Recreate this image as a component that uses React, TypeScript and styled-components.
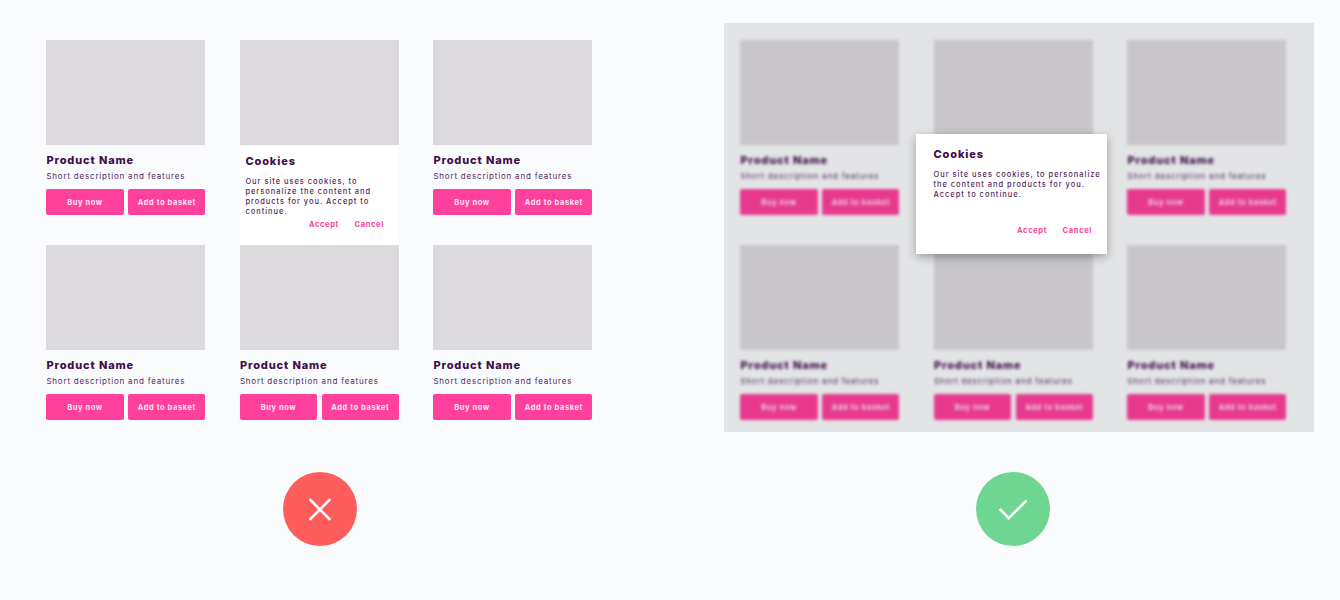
import React from 'react';
import styled, { createGlobalStyle, css } from 'styled-components';

const color = {
  PAGE: '#f9fbfd',
  TITLE: '#3f0f4b',
  TEXT: '#542a5e',
  PRIMARY: '#ff409c',
  IMAGE: '#dcdadd',
  WRONG: '#ff5c5c',
  RIGHT: '#6fd692',
};

const products = [1, 2, 3, 4, 5, 6];

const ProductInfo: React.FC = () => (
  <Info>
    <Title>Product Name</Title>
    <Description>Short description and features</Description>
    <ButtonBox>
      <Button>Buy now</Button>
      <Button>Add to basket</Button>
    </ButtonBox>
  </Info>
);

const InlineNotice: React.FC = () => (
  <Notice>
    <Title>Cookies</Title>
    <CookieText>
      Our site uses cookies, to
      <br />
      personalize the content and
      <br />
      products for you. Accept to
      <br />
      continue.
    </CookieText>
    <NoticeActions>
      <LinkButton>Accept</LinkButton>
      <LinkButton>Cancel</LinkButton>
    </NoticeActions>
  </Notice>
);

interface ProductsProps {
  blurred?: boolean;
}

/* The second product never shows its info: the notice or the modal is there */
const Products: React.FC<ProductsProps> = ({ blurred }) => (
  <ProductGrid $blurred={blurred}>
    {products.map((id) => (
      <Card key={id}>
        <Image />
        {id !== 2 && <ProductInfo />}
        {id === 2 && !blurred && <InlineNotice />}
      </Card>
    ))}
  </ProductGrid>
);

const App: React.FC = () => {
  return (
    <>
      <GlobalStyle />
      <Page>
        <Example>
          <Panel>
            <Products />
          </Panel>
          <Mark $color={color.WRONG}>
            <svg width="74" height="74" viewBox="0 0 74 74">
              <path d="M26.6 27.2 47.2 47.8M47.2 27.2 26.6 47.8" />
            </svg>
          </Mark>
        </Example>
        <Example>
          <Panel>
            <Products blurred />
            <Dim />
            <Modal>
              <Title>Cookies</Title>
              <CookieText>
                Our site uses cookies, to personalize
                <br />
                the content and products for you.
                <br />
                Accept to continue.
              </CookieText>
              <ModalActions>
                <LinkButton>Accept</LinkButton>
                <LinkButton>Cancel</LinkButton>
              </ModalActions>
            </Modal>
          </Panel>
          <Mark $color={color.RIGHT} $shift={-12}>
            <svg width="74" height="74" viewBox="0 0 74 74">
              <path d="M23.6 36.8 32.7 46.2 50.4 28.6" />
            </svg>
          </Mark>
        </Example>
      </Page>
    </>
  );
};

export default App;

const GlobalStyle = createGlobalStyle`
  * {
    box-sizing: border-box;
  }
  body {
    margin: 0;
    background-color: ${color.PAGE};
    font-family: Inter, 'Liberation Sans', sans-serif;
    color: ${color.TEXT};
  }
  h1, p {
    margin: 0;
  }
`;

const Page = styled.div`
  display: flex;
  gap: 104px;
  width: 1340px;
  height: 600px;
  padding: 23px 26px 0 30px;
  overflow: hidden;
`;

const Example = styled.div`
  display: flex;
  flex-direction: column;
  width: 590px;
`;

const Panel = styled.div`
  position: relative;
  height: 409px;
  padding: 17.4px 16.4px 0;
`;

const ProductGrid = styled.div<{ $blurred?: boolean }>`
  display: grid;
  grid-template-columns: repeat(3, 159px);
  grid-auto-rows: 205px;
  column-gap: 34.5px;
  ${({ $blurred }) =>
    $blurred &&
    css`
      filter: blur(1.5px);
    `}
`;

const Card = styled.div`
  display: flex;
  flex-direction: column;
`;

const Image = styled.div`
  height: 104.8px;
  background-color: ${color.IMAGE};
`;

const Info = styled.div`
  padding-top: 8px;
`;

const Title = styled.h1`
  font-size: 11px;
  line-height: 14px;
  font-weight: 800;
  letter-spacing: 0.88px;
  color: ${color.TITLE};
  white-space: nowrap;
`;

const Description = styled.p`
  margin-top: 4px;
  font-size: 8px;
  line-height: 10px;
  letter-spacing: 0.8px;
  white-space: nowrap;
`;

const ButtonBox = styled.div`
  display: flex;
  gap: 4.5px;
  margin-top: 8px;
`;

const Button = styled.button`
  flex: 1 1 0;
  height: 26px;
  padding: 1px 0 0;
  border: 0;
  border-radius: 2px;
  background-color: ${color.PRIMARY};
  color: #ffe3f2;
  font-family: inherit;
  font-size: 7.5px;
  font-weight: 700;
  letter-spacing: 0.6px;
  white-space: nowrap;
`;

const Notice = styled.div`
  height: 100.2px;
  padding: 9px 15px 0 5.5px;
  background-color: #fff;
`;

const CookieText = styled.p`
  margin-top: 8.5px;
  font-size: 7.5px;
  line-height: 10px;
  font-weight: 500;
  letter-spacing: 0.96px;
  white-space: nowrap;
`;

const NoticeActions = styled.div`
  display: flex;
  justify-content: flex-end;
  gap: 15.5px;
  margin-top: 3.5px;
`;

const LinkButton = styled.button`
  padding: 0;
  border: 0;
  background: none;
  color: ${color.PRIMARY};
  font-family: inherit;
  font-size: 7.5px;
  line-height: 10px;
  font-weight: 700;
  letter-spacing: 0.65px;
`;

const Dim = styled.div`
  position: absolute;
  inset: 0;
  background-color: rgba(0, 0, 0, 0.09);
`;

const Modal = styled.div`
  position: absolute;
  top: 111px;
  left: 192px;
  width: 191px;
  height: 120px;
  padding: 13px 15px 0 17.5px;
  background-color: #fff;
  box-shadow: 0 3px 9px rgba(0, 0, 0, 0.32);
`;

const ModalActions = styled(NoticeActions)`
  margin-top: 26.5px;
`;

const Mark = styled.div<{ $color: string; $shift?: number }>`
  align-self: center;
  width: 74px;
  height: 74px;
  margin-top: 40px;
  margin-left: ${({ $shift = -11 }) => $shift}px;
  border-radius: 50%;
  background-color: ${({ $color }) => $color};
  path {
    fill: none;
    stroke: #fff;
    stroke-width: 2.6;
  }
`;
